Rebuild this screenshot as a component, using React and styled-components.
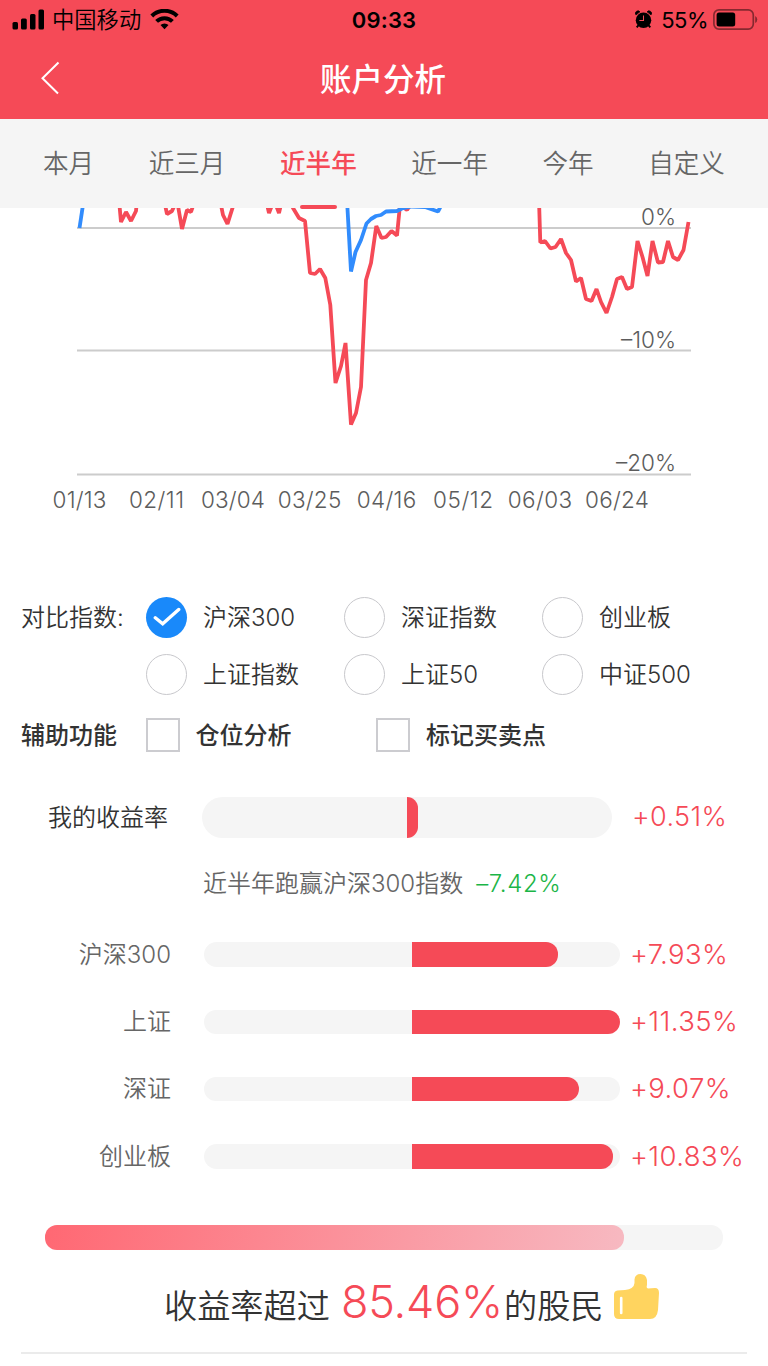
import React from "react";
import styled, { createGlobalStyle } from "styled-components";

const RED = "#f54a57";
const TRACK = "#f5f5f5";

const GlobalStyle = createGlobalStyle`
  body {
    margin: 0;
    background: #fff;
    font-family: Inter, "Noto Sans CJK SC", sans-serif;
    font-weight: 350;
  }
`;

const Page = styled.div`
  width: 768px;
  height: 1366px;
  overflow: hidden;
  color: #333;
  white-space: nowrap;
`;

const Header = styled.header`
  height: 119px;
  background: ${RED};
`;

const StatusBar = styled.div`
  display: grid;
  grid-template-columns: 1fr auto 1fr;
  align-items: center;
  height: 39px;
  padding: 0 10px 0 12px;
  color: #000;
`;

const StatusSide = styled.div`
  display: flex;
  align-items: center;
  justify-content: ${props => (props.$end ? "flex-end" : "flex-start")};
`;

const Carrier = styled.span`
  margin: 0 9px 0 7px;
  font-size: 22.3px;
  line-height: 39px;
`;

const Clock = styled.span`
  margin-right: 2px;
  font-size: 22px;
  font-weight: 600;
  letter-spacing: 0.2px;
`;

const Percent = styled.span`
  margin: 0 5px 0 9px;
  font-size: 22px;
  font-weight: 400;
  letter-spacing: -0.5px;
`;

const NavBar = styled.div`
  display: grid;
  grid-template-columns: 60px 1fr 60px;
  align-items: center;
  height: 78px;
`;

const Back = styled.svg`
  margin-left: 40px;
`;

const Title = styled.h1`
  margin: 0 2px 0 0;
  padding-top: 3px;
  text-align: center;
  font-size: 31.5px;
  font-weight: 500;
  line-height: 75px;
  color: #fff;
`;

const Tabs = styled.nav`
  display: flex;
  justify-content: space-between;
  height: 89px;
  padding: 0 43px;
  background: ${TRACK};
`;

const Tab = styled.a`
  position: relative;
  font-size: 25.6px;
  line-height: 90px;
  font-weight: ${props => (props.$active ? 500 : 350)};
  color: ${props => (props.$active ? RED : "#666")};

  &::after {
    content: "";
    display: ${props => (props.$active ? "block" : "none")};
    position: absolute;
    left: 50%;
    bottom: -1px;
    width: 37px;
    height: 4px;
    margin-left: -18px;
    border-radius: 2px;
    background: ${RED};
  }
`;

const Chart = styled.svg`
  display: block;
  font-size: 22.5px;
  fill: #5c5c5c;
`;

const Compare = styled.section`
  display: grid;
  grid-template-columns: 125px 198px 198px 198px;
  grid-auto-rows: 57px;
  align-items: center;
  margin-top: 37px;
  padding-left: 21px;
  font-size: 24px;
`;

const Option = styled.label`
  display: flex;
  align-items: center;
  gap: 16px;
  grid-column: ${props => props.$column};
`;

/* lifts the text so that the Chinese glyphs sit on the row's middle */
const Label = styled.span`
  padding-bottom: ${props => props.$lift || 4}px;
`;

const Radio = styled.span`
  display: flex;
  align-items: center;
  justify-content: center;
  box-sizing: border-box;
  width: 41px;
  height: 41px;
  border-radius: 50%;
  border: ${props => (props.$checked ? "none" : "1.5px solid #c8c8cc")};
  background: ${props => (props.$checked ? "#1989fa" : "#fff")};
`;

const Tools = styled.section`
  display: grid;
  grid-template-columns: 124.5px 230.5px 1fr;
  align-items: center;
  height: 63px;
  padding-left: 21px;
  font-size: 24px;
  font-weight: 500;

  ${Label} {
    padding-bottom: 2px;
  }
`;

const Checkbox = styled.span`
  box-sizing: border-box;
  width: 34px;
  height: 34px;
  border: 2px solid #ccccd0;
`;

const MyRate = styled.section`
  display: grid;
  grid-template-columns: 168px 410px 1fr;
  column-gap: 34px;
  align-items: center;
  height: 41px;
  margin-top: 31px;
  text-align: right;
  font-size: 24px;
`;

const Track = styled.div`
  height: ${props => props.$height}px;
  border-radius: 21px;
  background: ${TRACK};
`;

const Fill = styled.div`
  height: 100%;
  margin-left: 50%;
  border-radius: 0 12px 12px 0;
  background: ${RED};
`;

const Value = styled.span`
  padding-bottom: 2px;
  text-align: left;
  font-size: 27.5px;
  letter-spacing: 0.4px;
  color: ${RED};
`;

const MyValue = styled(Value)`
  margin-left: -14px;
  font-size: 27px;
`;

const Note = styled.p`
  display: flex;
  align-items: center;
  height: 48px;
  margin: 21px 0 14px 203px;
  font-size: 24px;
  color: #666;
`;

const Loss = styled.span`
  margin-left: 13px;
  color: #1bb547;
  letter-spacing: 0.6px;
`;

const IndexRow = styled.div`
  display: grid;
  grid-template-columns: 171px 416px 1fr;
  align-items: center;
  height: 67.3px;
  font-size: 24px;
  text-align: right;
  color: #666;

  ${Track} {
    margin: 0 -33px 0 33px;
  }

  ${Value} {
    margin-left: 43px;
  }
`;

const Rank = styled.div`
  height: 25px;
  margin: 35px 45px 0;
  border-radius: 12px;
  background: ${TRACK};
`;

const RankFill = styled.div`
  height: 100%;
  border-radius: 12px;
  background: linear-gradient(100deg, #ff6873, #f7b9c1);
`;

const Summary = styled.div`
  display: flex;
  align-items: baseline;
  height: 104px;
  box-sizing: border-box;
  margin: 0 21px;
  padding-left: 143px;
  border-bottom: 2px solid #ebebeb;
  font-size: 33.2px;
  line-height: 103px;
`;

const Score = styled.span`
  margin: 0 1px 0 11px;
  font-size: 45px;
  letter-spacing: -0.2px;
  color: ${RED};
`;

const Thumb = styled.svg`
  align-self: flex-start;
  margin: 23px 0 0 9px;
`;

const redLines = [
  "119,200 121,222 126,212 131,221 136,211 137,200",
  "164,200 167,214 172,211 177,200 182,229 187,210 191,212 195,200",
  "220,200 223,215 227.5,224 235,200",
  "266,200 269,213 274,200 279,213 282,200",
  "289,200 293,208 299,218 305,221 310,273 315,274 320,269 325.3,278 330.3,305 335.5,383 341,366 345.5,343 351,424.5 356,413 361,387 366,280 371,263 376.3,226 381.5,238 386,237 391.5,231 397,235.5 400,205 407,210 411,204",
  "539,200 540.3,242.5 545,241 550.5,248.5 555.5,247 561,239 566,253 571,260 576,281.5 581,278 586,299 591.5,301 596.5,289 601,302 606.5,313 612,297 617,279 622,277 627,289 632,287 637.5,241 642.5,257 647.5,276 652.5,241 658,262.5 663,262 668,241 673,257 678,260 683.5,250 688.5,222"
];

const blueLines = [
  "79.5,228 84.5,195",
  "347,200 351,271.5 355.5,252 361,240 366.5,223.5 371,219 376,216 381,215 386,211.5 397,211 402,208.5 412,206.5 425,207 438,211.5 442,204"
];

const dates = [
  ["01/13", 79.5, 54],
  ["02/11", 156.5, 55],
  ["03/04", 233, 64],
  ["03/25", 309.5, 63.5],
  ["04/16", 386.5, 59.5],
  ["05/12", 463, 60],
  ["06/03", 540, 64.5],
  ["06/24", 617, 64]
];

const indexes = [
  { name: "沪深300", value: "+7.93%", width: 146 },
  { name: "上证", value: "+11.35%", width: 208 },
  { name: "深证", value: "+9.07%", width: 167 },
  { name: "创业板", value: "+10.83%", width: 200.5 }
];

const options = ["沪深300", "深证指数", "创业板", "上证指数", "上证50", "中证500"];

const tabs = ["本月", "近三月", "近半年", "近一年", "今年", "自定义"];

const Signal = () => (
  <svg width="33" height="21" viewBox="0 0 33 21">
    <rect x="0.5" y="13" width="5.5" height="7.5" rx="1.5" />
    <rect x="9" y="9.5" width="5.8" height="11" rx="1.5" />
    <rect x="18" y="5" width="5.5" height="15.5" rx="1.5" />
    <rect x="26.5" y="0.5" width="5.5" height="20" rx="1.5" />
  </svg>
);

const Wifi = () => (
  <svg width="29" height="22" viewBox="0 0 29 22" fill="none" stroke="#000">
    <path d="M1.8 7a18 18 0 0 1 25.4 0" strokeWidth="4" />
    <path d="M6.6 12.4a11.2 11.2 0 0 1 15.8 0" strokeWidth="4" />
    <path d="M14.5 20.2l-4-4.1a5.7 5.7 0 0 1 8 0z" fill="#000" stroke="none" />
  </svg>
);

const Alarm = () => (
  <svg width="17" height="19" viewBox="0 0 18 19">
    <circle cx="9" cy="10.2" r="8.2" />
    <path
      d="M1 4.6a2.6 2.6 0 0 1 4.2-3.2zM17 4.6a2.6 2.6 0 0 0-4.2-3.2z"
      strokeWidth="0.8"
      stroke="#000"
    />
    <path d="M3.8 15.5l-2 2.3M14.2 15.5l2 2.3" stroke="#000" strokeWidth="2" />
    <path d="M9 5.2v5.3H4.6" fill="none" stroke={RED} strokeWidth="1.1" />
  </svg>
);

const Battery = () => (
  <svg width="45" height="21" viewBox="0 0 45 21">
    <rect
      x="0.9"
      y="0.9"
      width="39.4"
      height="19.2"
      rx="5"
      fill="none"
      stroke="#000"
      strokeOpacity="0.45"
      strokeWidth="1.7"
    />
    <rect x="3.6" y="3.6" width="18.6" height="13.8" rx="2.5" />
    <path d="M42.2 7a4 4 0 0 1 0 7z" opacity="0.45" />
  </svg>
);

export default function App() {
  return (
    <Page>
      <GlobalStyle />
      <Header>
        <StatusBar>
          <StatusSide>
            <Signal />
            <Carrier>中国移动</Carrier>
            <Wifi />
          </StatusSide>
          <Clock>09:33</Clock>
          <StatusSide $end>
            <Alarm />
            <Percent>55%</Percent>
            <Battery />
          </StatusSide>
        </StatusBar>
        <NavBar>
          <Back width="20" height="34" viewBox="0 0 20 34">
            <path
              d="M18.5 1.5L2.5 17.2 18 32.5"
              fill="none"
              stroke="#fff"
              strokeWidth="2"
            />
          </Back>
          <Title>账户分析</Title>
        </NavBar>
      </Header>

      <Tabs>
        {tabs.map(tab => (
          <Tab key={tab} $active={tab === "近半年"}>
            {tab}
          </Tab>
        ))}
      </Tabs>

      <Chart width="768" height="344" viewBox="0 208 768 344">
        {[228, 350.5, 474.5].map(y => (
          <line key={y} x1="77" x2="691" y1={y} y2={y} stroke="#ccc" strokeWidth="1.8" />
        ))}
        <g fill="none" stroke={RED} strokeWidth="3.8" strokeLinejoin="bevel">
          {redLines.map(points => (
            <polyline key={points} points={points} />
          ))}
        </g>
        <g fill="none" stroke="#318cfd" strokeWidth="3.8" strokeLinejoin="bevel">
          {blueLines.map(points => (
            <polyline key={points} points={points} />
          ))}
        </g>
        <text x="676" y="225" textAnchor="end">0%</text>
        <text x="676" y="347.5" textAnchor="end">–10%</text>
        <text x="676" y="470.5" textAnchor="end">–20%</text>
        {dates.map(([date, x, width]) => (
          <text key={date} x={x} y="507.5" textAnchor="middle" textLength={width}>
            {date}
          </text>
        ))}
      </Chart>

      <Compare>
        <Label>对比指数:</Label>
        {options.map((option, i) => (
          <Option key={option} $column={2 + (i % 3)}>
            <Radio $checked={i === 0}>
              {i === 0 && (
                <svg width="28" height="22" viewBox="0 0 28 22">
                  <path
                    d="M2.3 10.8l7.4 6L25.7 2.5"
                    fill="none"
                    stroke="#fff"
                    strokeWidth="3.4"
                    strokeLinecap="round"
                  />
                </svg>
              )}
            </Radio>
            <Label>{option}</Label>
          </Option>
        ))}
      </Compare>

      <Tools>
        <Label>辅助功能</Label>
        <Option>
          <Checkbox />
          <Label>仓位分析</Label>
        </Option>
        <Option>
          <Checkbox />
          <Label>标记买卖点</Label>
        </Option>
      </Tools>

      <MyRate>
        <Label>我的收益率</Label>
        <Track $height={41}>
          <Fill style={{ width: 10.5 }} />
        </Track>
        <MyValue>+0.51%</MyValue>
      </MyRate>

      <Note>
        <Label>近半年跑赢沪深300指数</Label>
        <Loss>–7.42%</Loss>
      </Note>

      {indexes.map(index => (
        <IndexRow key={index.name}>
          <Label $lift={5}>{index.name}</Label>
          <Track $height={24.5}>
            <Fill style={{ width: index.width }} />
          </Track>
          <Value>{index.value}</Value>
        </IndexRow>
      ))}

      <Rank>
        <RankFill style={{ width: "85.46%" }} />
      </Rank>

      <Summary>
        收益率超过
        <Score>85.46%</Score>
        的股民
        <Thumb width="47" height="48" viewBox="0 0 47 48">
          <path
            d="M1 21.5q0-3.500 3.500-4L12 17q9-1 9.500-7V6.500Q22 1 27.500 1T34 7v5q-1 3 1 3.500l7-.5q4 0 4 5l-1 17q-1 9-8 9H6q-5 0-5-5z"
            fill="#ffd45f"
          />
          <path d="M8.2 25v15" stroke="#fff" strokeWidth="2.6" strokeLinecap="round" />
        </Thumb>
      </Summary>
    </Page>
  );
}
